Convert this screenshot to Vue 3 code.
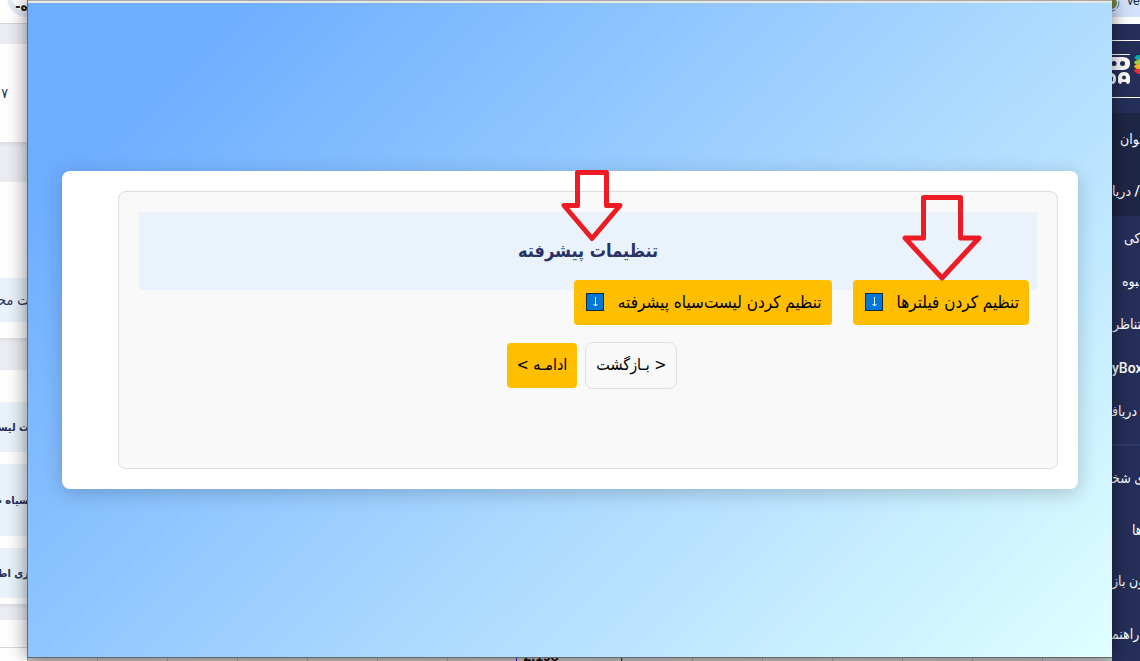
<script setup>
const leftBlocks = [
  { h: 23, tone: 'white', ring: true, text: '' },
  { h: 21, tone: 'grey edge' },
  { h: 98, tone: 'white', text: '۷' },
  { h: 40, tone: 'grey shade' },
  { h: 96, tone: 'white' },
  { h: 44, tone: 'blue plain', text: 'ت مح\u200d' },
  { h: 16, tone: 'white' },
  { h: 32, tone: 'grey shade' },
  { h: 32, tone: 'white' },
  { h: 50, tone: 'blue', text: 'ت لیس\u200d' },
  { h: 12, tone: 'white' },
  { h: 72, tone: 'blue', text: '\u200dسیاه م' },
  { h: 12, tone: 'white' },
  { h: 50, tone: 'blue', text: 'ری اطلا' },
  { h: 6, tone: 'white' },
  { h: 16, tone: 'grey shade' },
  { h: 27, tone: 'white' },
  { h: 14, tone: 'white edge' },
]

const menu = [
  { h: 52, text: '\u200dوان', pad: 8, dark: true },
  { h: 51, text: '/ دریا', pad: 0, dark: true },
  { h: 44, text: 'کی', pad: 12 },
  { h: 42, text: '\u200dبوه', pad: 10 },
  { h: 44, text: '\u200dتناظر', pad: 1 },
  { h: 44, text: 'yBox', pad: 0 },
  { h: 54, text: 'دریاف\u200d', pad: 0, end: true },
  { h: 66, text: 'ی شخ\u200d', pad: 0, line: true },
  { h: 40, text: 'ها', pad: 20 },
  { h: 62, text: 'ون باز', pad: 0 },
  { h: 44, text: 'راهنم\u200d', pad: 0 },
]

const cells = [1, 2, 3, 4, 5, 6, 7]
</script>

<template>
  <div class="screen">
    <aside class="left" dir="rtl">
      <div
        v-for="(b, i) in leftBlocks"
        :key="i"
        class="block"
        :class="b.tone"
        :style="{ height: b.h + 'px' }"
      >
        <span v-if="b.ring" class="ring">ه-</span>
        <span v-if="b.text">{{ b.text }}</span>
      </div>
    </aside>

    <main class="window" dir="rtl">
      <div class="card">
        <section class="panel">
          <header class="band">
            <h1>تنظیمات پیشرفته</h1>
            <svg class="arrow arrow-title" width="62" height="74" viewBox="0 0 62 74" aria-hidden="true">
              <path d="M16.5 3.5H45.5V36.5H59L31 69.5L3 36.5H16.5Z" />
            </svg>
          </header>
          <div class="actions">
            <div class="anchor">
              <button type="button" class="btn gold">
                <span>تنظیم کردن فیلترها</span>
                <svg class="down" viewBox="0 0 18 18" aria-hidden="true">
                  <rect x="0.5" y="0.5" width="17" height="17" />
                  <path d="M9.5 4V13M7.5 11L9.5 13L11.5 11" />
                </svg>
              </button>
              <svg class="arrow arrow-filter" width="80" height="88" viewBox="0 0 80 88" aria-hidden="true">
                <path d="M21.5 3.5H58.5V44H77L40 84L3 44H21.5Z" />
              </svg>
            </div>
            <button type="button" class="btn gold">
              <span>تنظیم کردن لیست‌سیاه پیشرفته</span>
              <svg class="down" viewBox="0 0 18 18" aria-hidden="true">
                <rect x="0.5" y="0.5" width="17" height="17" />
                <path d="M9.5 4V13M7.5 11L9.5 13L11.5 11" />
              </svg>
            </button>
          </div>
          <div class="steps">
            <button type="button" class="btn back">&lt; بـازگشت</button>
            <button type="button" class="btn gold">ادامـه &gt;</button>
          </div>
        </section>
      </div>
    </main>

    <nav class="right">
      <div class="tab">
        <svg width="8" height="14" viewBox="0 0 8 14" aria-hidden="true">
          <circle cx="-1" cy="3" r="6" fill="#71813c" />
          <circle cx="-1" cy="3" r="8" fill="none" stroke="#536b98" stroke-dasharray="6 2" />
        </svg>
        <span>ve</span>
      </div>
      <div class="gap"></div>
      <div class="logo">
        <svg width="28" height="57" viewBox="0 0 28 57" aria-hidden="true">
          <path d="M0 13.5H18" stroke="#fff" />
          <path d="M0 16H11Q18 16 18 22.5T11 29H0Z" fill="#fff" />
          <circle cx="2" cy="22.5" r="2.5" fill="#252f59" />
          <circle cx="10.500" cy="22.5" r="2.5" fill="#252f59" />
          <path d="M0 32Q4 33 4 38Q4 43 0 43ZM6 40Q5 31 12 31T18 40Q18 43 15 43L14 41H10L9 43Q6 43 6 40Z" fill="#fff" />
          <circle cx="12" cy="36.500" r="2" fill="#252f59" />
          <path d="M0 36H1V40H0Z" fill="#252f59" />
          <path d="M28 14L25 14L22 17L25 19H28Z" fill="#12a5a5" />
          <path d="M28 18L23 20L22 22L25 24H28Z" fill="#a8c93a" />
          <path d="M28 23L23 24L22 26L25 28H28Z" fill="#f5b51b" />
          <path d="M28 28L23 28L22 30L26 33H28Z" fill="#e6332d" />
        </svg>
      </div>
      <div class="spacer"></div>
      <a
        v-for="m in menu"
        :key="m.text"
        href="#"
        :class="{ dark: m.dark, line: m.line, end: m.end }"
        :style="{ height: m.h + 'px', paddingLeft: m.pad + 'px' }"
      ><span dir="rtl">{{ m.text }}</span></a>
    </nav>

    <footer class="sheet">
      <i v-for="c in cells" :key="c" class="cell"></i>
      <span class="value"><b>2,198</b></span>
      <i v-for="c in cells" :key="'m' + c" class="cell"></i>
    </footer>
  </div>
</template>

<style>
body {
  background: #fff;
}
</style>

<style scoped>
.screen {
  display: grid;
  grid-template-columns: 27px minmax(0, 1fr) 28px;
  grid-template-rows: minmax(0, 1fr) 3px;
  height: 100vh;
  overflow: hidden;
  font-family: "DejaVu Sans Condensed", "DejaVu Sans", sans-serif;
  font-size: 16px;
}
.left {
  grid-row: 1 / 3;
  overflow: hidden;
}
.block {
  display: flex;
  align-items: center;
  box-sizing: border-box;
  overflow: hidden;
  white-space: nowrap;
  color: #252f59;
  font-size: 11px;
  font-weight: bold;
}
.white {
  background: #fff;
}
.white span {
  margin-right: 19px;
  font-size: 14px;
  font-weight: normal;
}
.grey {
  background: #ecedf2;
}
.blue {
  background: #eaf3fb;
}
.blue span {
  margin-right: -2px;
}
.plain {
  font-size: 14px;
  font-weight: normal;
}
.edge {
  border-top: 1px solid #d5d6da;
}
.shade {
  background: linear-gradient(#dddee3, #ecedf2 5px);
}
.white .ring {
  flex: none;
  align-self: flex-end;
  box-sizing: border-box;
  width: 40px;
  height: 40px;
  margin: 0 -20px 6px 0;
  padding: 18px 14px 0 0;
  border: 5px solid #e6ecf7;
  border-radius: 50%;
  color: #222;
  font-size: 14px;
  font-weight: bold;
  line-height: 12px;
}
.window {
  z-index: 1;
  display: flex;
  align-items: center;
  box-sizing: border-box;
  padding: 3px 34px 0;
  border: 1px solid #686868;
  border-width: 0 0 1px 1px;
  background:
    linear-gradient(#a9a9a9 1px, #e9e7e4 1px) top / 100% 3px no-repeat,
    linear-gradient(135deg, #6eaeff 12%, #e0ffff 100%);
  box-shadow: 0 0 18px rgba(0, 0, 0, 0.5);
}
.card {
  flex: 1;
  padding: 20px 20px 20px 56px;
  border-radius: 8px;
  background: #fff;
  box-shadow: 0 4px 20px rgba(0, 0, 0, 0.2);
}
.panel {
  box-sizing: border-box;
  min-height: 278px;
  padding: 20px;
  border: 1px solid #ddd;
  border-radius: 8px;
  background: #f9f9f9;
}
.band {
  position: relative;
  display: flex;
  align-items: center;
  justify-content: center;
  height: 78px;
  background: #eaf3fb;
}
h1 {
  margin: 0;
  color: #283266;
  font-size: 18px;
  line-height: 28px;
}
.actions {
  display: flex;
  gap: 21px;
  margin: -10px 8px 17px;
}
.anchor {
  position: relative;
}
.btn {
  display: flex;
  align-items: center;
  justify-content: space-between;
  gap: 14px;
  box-sizing: border-box;
  height: 45px;
  padding: 0 10px 2px;
  border: 0;
  border-radius: 4px;
  color: #000;
  font: 16px/24px "DejaVu Sans Condensed", "DejaVu Sans", sans-serif;
  white-space: nowrap;
}
.gold {
  background: #ffbf00;
}
.actions .gold {
  position: relative;
  font-size: 17px;
}
.down {
  width: 18px;
  height: 18px;
  margin-left: 2px;
}
.down rect {
  fill: #0078d7;
  stroke: #15283c;
}
.down path {
  fill: none;
  stroke: #fff;
}
.steps {
  display: flex;
  align-items: center;
  justify-content: center;
  gap: 8px;
  padding-left: 8px;
}
.back {
  height: 47px;
  border: 1px solid #dedfe8;
  border-radius: 8px;
  background: #f9f9f9;
}
.arrow {
  position: absolute;
  z-index: 2;
  pointer-events: none;
}
.arrow path {
  fill: none;
  stroke: #ed1c24;
  stroke-width: 5;
  stroke-linejoin: round;
}
.arrow-title {
  bottom: 47px;
  left: calc(50% - 27px);
}
.arrow-filter {
  bottom: 43px;
  left: calc(50% - 39px);
}
.right {
  grid-column: 3;
  grid-row: 1 / 3;
  overflow: hidden;
  background: #252f59;
}
.tab {
  display: flex;
  gap: 7px;
  height: 17px;
  background: #d3e3fd;
  color: #20283a;
  font: 13px/1 Roboto, sans-serif;
}
.tab span {
  margin-top: -6px;
}
.gap {
  height: 7px;
  margin-bottom: 16px;
  background: #fff;
}
.logo {
  height: 56px;
  border: 1px solid #fff;
  border-width: 1px 0;
}
.logo svg {
  display: block;
}
.spacer {
  height: 15px;
}
.right a {
  display: flex;
  align-items: center;
  box-sizing: border-box;
  overflow: hidden;
  color: #fff;
  font-family: Roboto, "DejaVu Sans Condensed", "DejaVu Sans", sans-serif;
  font-size: 14px;
  font-weight: 500;
  text-decoration: none;
  white-space: nowrap;
}
.right .dark {
  background: #1f2747;
}
.right .line {
  border-top: 2px solid #303b6e;
}
.right .end {
  align-items: flex-start;
  padding-top: 13px;
}
.sheet {
  grid-column: 2;
  grid-row: 2;
  display: flex;
  overflow: hidden;
  background: #c9c9cb;
}
.cell {
  flex: 1;
  border-left: 1px solid #aaa;
}
.value {
  flex: none;
  width: 104px;
  border: 1px solid #2222c8;
  border-width: 0 1px;
  color: #111;
  font: 14px/1 "Liberation Sans", sans-serif;
  text-indent: 6px;
}
.value b {
  display: block;
  margin-top: -9px;
}
</style>
